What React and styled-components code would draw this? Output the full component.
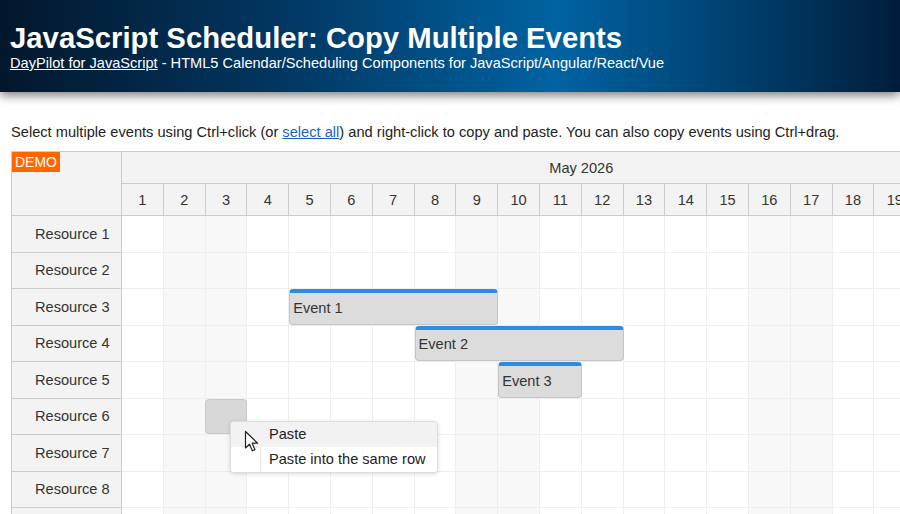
import React from "react";
import styled, { createGlobalStyle } from "styled-components";

const CELL = 41.8;
const ROW_H = 36.5;
const DAYS = 22;
const WEEKENDS = [2, 3, 9, 10, 16, 17];

const GlobalStyle = createGlobalStyle`
  html, body {
    margin: 0;
    padding: 0;
    overflow: hidden;
    background: #fff;
  }
  body {
    font-family: "Liberation Sans", Arial, sans-serif;
    color: #222;
  }
`;

const Header = styled.header`
  height: 92px;
  box-sizing: border-box;
  padding: 22px 10px 0;
  background: linear-gradient(90deg, #03172c 0%, #02355f 30%, #0063a2 62%, #003a66 85%, #001d3a 100%);
  box-shadow: 0 3px 10px rgba(0, 0, 0, 0.55);
  color: #fff;
`;

const Title = styled.h1`
  margin: 0;
  font-size: 29.3px;
  line-height: 32px;
  font-weight: bold;
`;

const Subtitle = styled.div`
  font-size: 14.6px;
  line-height: 18px;

  a {
    color: #fff;
    text-decoration: underline;
  }
`;

const Main = styled.main`
  padding: 31px 0 0 11px;
`;

const Intro = styled.p`
  margin: 0 0 10px;
  font-size: 14.65px;
  line-height: 18px;
  white-space: nowrap;

  a {
    color: #1a5fc2;
    text-decoration: underline;
  }
`;

const Scheduler = styled.div`
  position: relative;
  display: flex;
  width: ${110 + DAYS * CELL}px;
  border-left: 1px solid #ccc;
  border-top: 1px solid #ccc;
  font-size: 14.6px;
  color: #333;
`;

const RowHeaderColumn = styled.div`
  width: 110px;
  flex: none;
  box-sizing: border-box;
  border-right: 1px solid #ccc;
  background: #f3f3f3;
`;

const Corner = styled.div`
  height: 64px;
  box-sizing: border-box;
  border-bottom: 1px solid #ccc;
`;

const Demo = styled.span`
  display: inline-block;
  padding: 0 3px;
  height: 20px;
  line-height: 20px;
  background: #ff6600;
  color: #fff;
  font-size: 14px;
`;

const ResourceName = styled.div`
  height: ${ROW_H}px;
  box-sizing: border-box;
  border-bottom: 1px solid #ccc;
  padding-left: 23px;
  display: flex;
  align-items: center;
`;

const Timeline = styled.div`
  flex: none;
`;

const MonthRow = styled.div`
  height: 32px;
  box-sizing: border-box;
  border-bottom: 1px solid #ccc;
  border-right: 1px solid #ccc;
  background: #f3f3f3;
  display: flex;
  align-items: center;
  justify-content: center;
`;

const DayRow = styled.div`
  display: grid;
  grid-template-columns: repeat(${DAYS}, ${CELL}px);
  height: 32px;
  box-sizing: border-box;
  border-bottom: 1px solid #ccc;
  background: #f3f3f3;
`;

const DayCell = styled.div`
  box-sizing: border-box;
  border-right: 1px solid #ccc;
  display: flex;
  align-items: center;
  justify-content: center;
`;

const Row = styled.div`
  display: grid;
  grid-template-columns: repeat(${DAYS}, ${CELL}px);
  grid-template-rows: ${ROW_H}px;
`;

const Cell = styled.div`
  grid-row: 1;
  box-sizing: border-box;
  border-right: 1px solid #eee;
  border-bottom: 1px solid #eee;
  background: ${(p) => (p.$weekend ? "#f8f8f8" : "#fff")};
`;

const Event = styled.div`
  grid-row: 1;
  z-index: 1;
  box-sizing: border-box;
  margin-bottom: 1px;
  border: 1px solid #c4c4c4;
  border-top: 4px solid #2b8ce0;
  border-radius: 4px;
  background: #dcdcdc;
  padding: 0 3px 1px;
  display: flex;
  align-items: center;
  color: #333;
  white-space: nowrap;
`;

const Placeholder = styled.div`
  grid-row: 1;
  z-index: 1;
  box-sizing: border-box;
  margin: 0 0 1px -1px;
  border: 1px solid #c8c8c8;
  border-radius: 4px;
  background: #d8d8d8;
`;

const Menu = styled.div`
  position: absolute;
  left: 218px;
  top: 269px;
  width: 208px;
  z-index: 5;
  box-sizing: border-box;
  border: 1px solid #ddd;
  border-radius: 4px;
  background: #fff;
  box-shadow: 0 1px 4px rgba(0, 0, 0, 0.15);
  overflow: hidden;
`;

const MenuItem = styled.div`
  position: relative;
  height: 25px;
  line-height: 25px;
  padding-left: 38px;
  color: #222;
  background: ${(p) => (p.$active ? "#f2f2f2" : "#fff")};

  &::before {
    content: "";
    position: absolute;
    left: 29px;
    top: 0;
    bottom: 0;
    width: 1px;
    background: ${(p) => (p.$active ? "transparent" : "#e4e4e4")};
  }
`;

const Cursor = styled.svg`
  position: absolute;
  left: 232px;
  top: 278px;
  z-index: 6;
`;

const resources = Array.from({ length: 9 }, (_, i) => `Resource ${i + 1}`);

const events = [
  { row: 2, start: 5, days: 5, text: "Event 1" },
  { row: 3, start: 8, days: 5, text: "Event 2" },
  { row: 4, start: 10, days: 2, text: "Event 3" },
];

export default function App() {
  const days = Array.from({ length: DAYS }, (_, i) => i + 1);

  return (
    <>
      <GlobalStyle />
      <Header>
        <Title>JavaScript Scheduler: Copy Multiple Events</Title>
        <Subtitle>
          <a href="#daypilot">DayPilot for JavaScript</a> - HTML5 Calendar/Scheduling Components for JavaScript/Angular/React/Vue
        </Subtitle>
      </Header>
      <Main>
        <Intro>
          Select multiple events using Ctrl+click (or <a href="#all">select all</a>) and right-click to copy and paste. You can also copy events using Ctrl+drag.
        </Intro>
        <Scheduler>
          <RowHeaderColumn>
            <Corner>
              <Demo>DEMO</Demo>
            </Corner>
            {resources.map((r) => (
              <ResourceName key={r}>{r}</ResourceName>
            ))}
          </RowHeaderColumn>
          <Timeline>
            <MonthRow>May 2026</MonthRow>
            <DayRow>
              {days.map((d) => (
                <DayCell key={d}>{d}</DayCell>
              ))}
            </DayRow>
            {resources.map((r, ri) => (
              <Row key={r}>
                {days.map((d) => (
                  <Cell key={d} $weekend={WEEKENDS.includes(d)} style={{ gridColumn: d }} />
                ))}
                {events
                  .filter((e) => e.row === ri)
                  .map((e) => (
                    <Event key={e.text} style={{ gridColumn: `${e.start} / span ${e.days}` }}>
                      {e.text}
                    </Event>
                  ))}
                {ri === 5 && <Placeholder style={{ gridColumn: "3 / span 1" }} />}
              </Row>
            ))}
          </Timeline>
          <Menu>
            <MenuItem $active>Paste</MenuItem>
            <MenuItem>Paste into the same row</MenuItem>
          </Menu>
          <Cursor width="16" height="24" viewBox="0 0 16 24">
            <path
              d="M1.5 1.5 L1.5 18 L5.5 14.2 L8.4 20.8 L11 19.7 L8.2 13.2 L13.6 13.2 Z"
              fill="#fff"
              stroke="#222"
              strokeWidth="1.2"
              strokeLinejoin="round"
            />
          </Cursor>
        </Scheduler>
      </Main>
    </>
  );
}
